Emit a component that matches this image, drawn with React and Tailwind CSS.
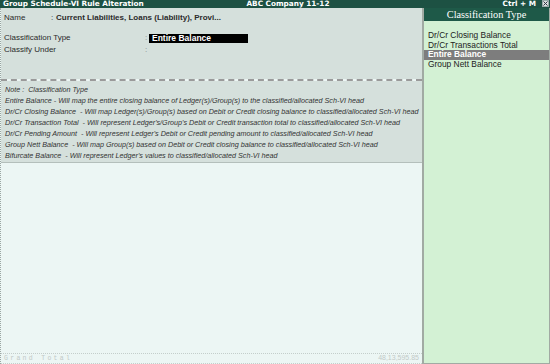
import React from "react";

const notes = [
  ["Entire Balance", " - Will map the entire closing balance of Ledger(s)/Group(s) to the classified/allocated Sch-VI head"],
  ["Dr/Cr Closing Balance", "  - Will map Ledger(s)/Group(s) based on Debit or Credit closing balance to classified/allocated Sch-VI head"],
  ["Dr/Cr Transaction Total", "  - Will represent Ledger's/Group's Debit or Credit transaction total to classified/allocated Sch-VI head"],
  ["Dr/Cr Pending Amount", "  - Will represent Ledger's Debit or Credit pending amount to classified/allocated Sch-VI head"],
  ["Group Nett Balance", "  - Will map Group(s) based on Debit or Credit closing balance to classified/allocated Sch-VI head"],
  ["Bifurcate Balance", "  - Will represent Ledger's values to classified/allocated Sch-VI head"],
];

const options = [
  "Dr/Cr Closing Balance",
  "Dr/Cr Transactions Total",
  "Entire Balance",
  "Group Nett Balance",
];

export default function App() {
  return (
    <div className="w-[550px] h-[364px] flex flex-col overflow-hidden bg-[#ecf6f4] font-['Liberation_Sans',Arial,sans-serif]">
      {/* title bar */}
      <div className="h-[8px] grid grid-cols-[1fr_auto_1fr] items-center bg-[#1d5143] text-white font-bold font-['DejaVu_Sans',Verdana,sans-serif] text-[7.3px] leading-none">
        <div className="pl-[3px] whitespace-nowrap">Group Schedule-VI Rule Alteration</div>
        <div className="whitespace-nowrap pl-[26px]">ABC Company 11-12</div>
        <div className="flex items-center justify-end gap-[6px] pr-[1px]">
          <span className="whitespace-nowrap">Ctrl + M</span>
          <span className="w-[7px] h-[7px] border border-[#9aa] bg-[#d8e0de] flex items-center justify-center">
            <svg width="5" height="5" viewBox="0 0 5 5">
              <path d="M0.5 0.5 L4.5 4.5 M4.5 0.5 L0.5 4.5" stroke="#334" strokeWidth="1" />
            </svg>
          </span>
        </div>
      </div>

      <div className="flex flex-1 min-h-0">
        {/* left */}
        <div className="flex-1 flex flex-col border-l border-dotted border-[#9aa6a2]">
          <div className="bg-[#d5e0dc] text-[8px] text-[#2b2b2b] leading-[10px] pt-[5px] h-[71px]">
            <div className="flex pl-[3px]">
              <span className="w-[47px]">Name</span>
              <span className="w-[5px]">:</span>
              <span className="font-bold whitespace-nowrap">Current Liabilities, Loans (Liability), Provi...</span>
            </div>
            <div className="flex pl-[3px] mt-[10px] items-center">
              <span className="w-[141px]">Classification Type</span>
              <span className="w-[4px] text-[#888]">:</span>
              <span className="w-[99px] h-[9px] bg-black text-white font-bold text-[8.5px] leading-[9px] pl-[3px]">Entire Balance</span>
            </div>
            <div className="flex pl-[3px] mt-[2px]">
              <span className="w-[141px]">Classify Under</span>
              <span className="text-[#888]">:</span>
            </div>
          </div>
          <div className="border-t-2 border-dashed border-[#9a9a9a]" />
          <div className="bg-[#d5e0dc] italic text-[7.2px] leading-[11px] text-[#333] pl-[4px] pt-[3px] pb-[1px] border-b border-[#b4bfbb]">
            <div>Note :&nbsp; Classification Type</div>
            {notes.map(([a, b]) => (
              <div key={a} className="whitespace-pre">
                {a}
                {b}
              </div>
            ))}
          </div>
          <div className="flex-1" />
          <div className="h-[11px] border-t border-dotted border-[#c4cecb] border-b flex items-center justify-between text-[6.5px] text-[#c2cac8] px-[3px] font-['Liberation_Mono',monospace]">
            <span className="tracking-[2.3px]">Grand Total</span>
            <span className="font-['Liberation_Sans',Arial,sans-serif] text-[7px]">48,13,595.85</span>
          </div>
        </div>

        {/* right */}
        <div className="w-[128px] flex flex-col bg-[#d3f1d4] border-l-2 border-[#a1aaa3] border-r border-r-[#a1aaa3] border-b border-b-[#a1aaa3]">
          <div className="h-[13px] bg-[#1e5948] text-white text-center font-['Liberation_Serif',serif] text-[10.3px] leading-[13px]">
            Classification Type
          </div>
          <div className="pt-[10px] text-[8.4px] leading-[9.6px] text-[#222]">
            {options.map((o) => (
              <div
                key={o}
                className={
                  o === "Entire Balance"
                    ? "pl-[4px] bg-[#7d7d7d] text-white font-bold"
                    : "pl-[4px]"
                }
              >
                {o}
              </div>
            ))}
          </div>
        </div>
      </div>
    </div>
  );
}
